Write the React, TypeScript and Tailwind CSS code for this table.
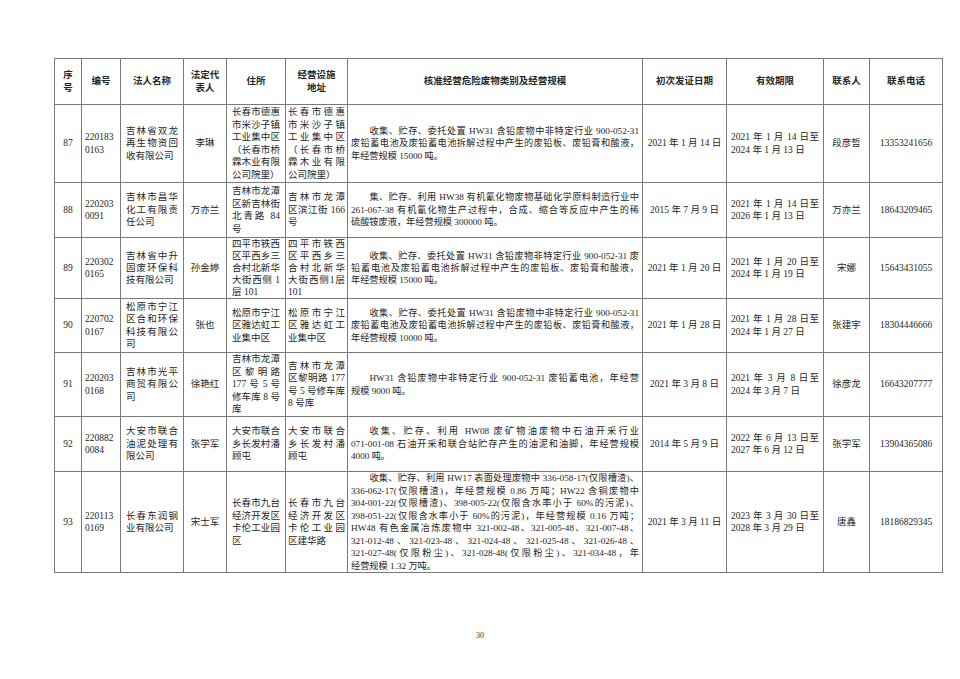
import React from "react";

type Row = {
  no: string;
  code: [string, string];
  name: string[];
  rep: string;
  addr: string[];
  fac: string[];
  scope: string[];
  first: string;
  valid: [string, string];
  contact: string;
  phone: string;
  h: string;
  tight?: boolean;
};

const rows: Row[] = [
  {
    no: "87",
    code: ["220183", "0163"],
    name: ["吉林省双龙", "再生物资回", "收有限公司"],
    rep: "李琳",
    addr: ["长春市德惠", "市米沙子镇", "工业集中区", "（长春市桥", "霖木业有限", "公司院里）"],
    fac: ["长春市德惠", "市米沙子镇", "工业集中区", "（长春市桥", "霖木业有限", "公司院里）"],
    scope: [
      "收集、贮存、委托处置 HW31 含铅废物中非特定行业 900-052-31",
      "废铅蓄电池及废铅蓄电池拆解过程中产生的废铅板、废铅膏和酸液，",
      "年经营规模 15000 吨。",
    ],
    first: "2021 年 1 月 14 日",
    valid: ["2021 年 1 月 14 日至", "2024 年 1 月 13 日"],
    contact: "段彦哲",
    phone: "13353241656",
    h: "h-[78px]",
  },
  {
    no: "88",
    code: ["220203", "0091"],
    name: ["吉林市昌华", "化工有限责", "任公司"],
    rep: "万亦兰",
    addr: ["吉林市龙潭", "区新吉林街", "北青路 84", "号"],
    fac: ["吉林市龙潭", "区滨江街 166", "号"],
    scope: [
      "集、贮存、利用 HW38 有机氰化物废物基础化学原料制造行业中",
      "261-067-38 有机氰化物生产过程中，合成、缩合等反应中产生的稀",
      "硫酸铵废液，年经营规模 300000 吨。",
    ],
    first: "2015 年 7 月 9 日",
    valid: ["2021 年 1 月 14 日至", "2026 年 1 月 13 日"],
    contact: "万亦兰",
    phone: "18643209465",
    h: "h-[55px]",
  },
  {
    no: "89",
    code: ["220302", "0165"],
    name: ["吉林省中升", "固废环保科", "技有限公司"],
    rep: "孙金婷",
    addr: ["四平市铁西", "区平西乡三", "合村北新华", "大街西侧 1", "层 101"],
    fac: ["四平市铁西", "区平西乡三", "合村北新华", "大街西侧1层", "101"],
    scope: [
      "收集、贮存、委托处置 HW31 含铅废物非特定行业 900-052-31 废",
      "铅蓄电池及废铅蓄电池拆解过程中产生的废铅板、废铅膏和酸液，",
      "年经营规模 15000 吨。",
    ],
    first: "2021 年 1 月 20 日",
    valid: ["2021 年 1 月 20 日至", "2024 年 1 月 19 日"],
    contact: "宋娜",
    phone: "15643431055",
    h: "h-[61px]",
    tight: true,
  },
  {
    no: "90",
    code: ["220702", "0167"],
    name: ["松原市宁江", "区合和环保", "科技有限公", "司"],
    rep: "张也",
    addr: ["松原市宁江", "区雅达虹工", "业集中区"],
    fac: ["松原市宁江", "区雅达虹工", "业集中区"],
    scope: [
      "收集、贮存、委托处置 HW31 含铅废物中非特定行业 900-052-31",
      "废铅蓄电池及废铅蓄电池拆解过程中产生的废铅板、废铅膏和酸液，",
      "年经营规模 10000 吨。",
    ],
    first: "2021 年 1 月 28 日",
    valid: ["2021 年 1 月 28 日至", "2024 年 1 月 27 日"],
    contact: "张建宇",
    phone: "18304446666",
    h: "h-[54px]",
  },
  {
    no: "91",
    code: ["220203", "0168"],
    name: ["吉林市光平", "商贸有限公", "司"],
    rep: "徐艳红",
    addr: ["吉林市龙潭", "区黎明路", "177 号 5 号", "修车库 8 号", "库"],
    fac: ["吉林市龙潭", "区黎明路 177", "号 5 号修车库", "8 号库"],
    scope: [
      "HW31 含铅废物中非特定行业 900-052-31 废铅蓄电池，年经营",
      "规模 9000 吨。",
    ],
    first: "2021 年 3 月 8 日",
    valid: ["2021 年 3 月 8 日至", "2024 年 3 月 7 日"],
    contact: "徐彦龙",
    phone: "16643207777",
    h: "h-[64px]",
  },
  {
    no: "92",
    code: ["220882", "0084"],
    name: ["大安市联合", "油泥处理有", "限公司"],
    rep: "张学军",
    addr: ["大安市联合", "乡长发村潘", "顾屯"],
    fac: ["大安市联合", "乡长发村潘", "顾屯"],
    scope: [
      "收集、贮存、利用 HW08 废矿物油废物中石油开采行业",
      "071-001-08 石油开采和联合站贮存产生的油泥和油脚，年经营规模",
      "4000 吨。",
    ],
    first: "2014 年 5 月 9 日",
    valid: ["2022 年 6 月 13 日至", "2027 年 6 月 12 日"],
    contact: "张学军",
    phone: "13904365086",
    h: "h-[55px]",
  },
  {
    no: "93",
    code: ["220113", "0169"],
    name: ["长春东润钢", "业有限公司"],
    rep: "宋士军",
    addr: ["长春市九台", "经济开发区", "卡伦工业园", "区"],
    fac: ["长春市九台", "经济开发区", "卡伦工业园", "区建华路"],
    scope: [
      "收集、贮存、利用 HW17 表面处理废物中 336-058-17(仅限槽渣)、",
      "336-062-17(仅限槽渣)，年经营规模 0.86 万吨；HW22 含铜废物中",
      "304-001-22(仅限槽渣)、398-005-22(仅限含水率小于 60%的污泥)、",
      "398-051-22(仅限含水率小于 60%的污泥)，年经营规模 0.16 万吨；",
      "HW48 有色金属冶炼废物中 321-002-48、321-005-48、321-007-48、",
      "321-012-48、321-023-48、321-024-48、321-025-48、321-026-48、",
      "321-027-48(仅限粉尘)、321-028-48(仅限粉尘)、321-034-48，年",
      "经营规模 1.32 万吨。",
    ],
    first: "2021 年 3 月 11 日",
    valid: ["2023 年 3 月 30 日至", "2028 年 3 月 29 日"],
    contact: "唐鑫",
    phone: "18186829345",
    h: "h-[100px]",
  },
];

function JLines({ lines, indent }: { lines: string[]; indent?: boolean }) {
  return (
    <>
      {lines.map((l, i) => {
        const last = i === lines.length - 1;
        const cls =
          (last ? "text-left" : "text-justify [text-align-last:justify]") +
          (indent && i === 0 ? " indent-[2em]" : "");
        return (
          <div key={i} className={cls}>
            {l}
          </div>
        );
      })}
    </>
  );
}

const td = "border border-[#7a7a7a] p-0 align-middle";
const th = "border border-[#7a7a7a] p-0 align-middle font-bold text-center";

export default function App() {
  const widths = [27, 39, 63, 43, 59, 62, 295, 84, 97, 46, 73];
  return (
    <div className="min-h-[679px] w-[960px] bg-white pl-[54px] pt-[58px] font-['Liberation_Serif','Noto_Sans_CJK_SC',serif] text-[9.5px] leading-[12.5px] text-[#262626]">
      <table className="table-fixed border-collapse w-[888px]">
        <colgroup>
          {widths.map((w, i) => (
            <col key={i} style={{ width: w }} />
          ))}
        </colgroup>
        <thead>
          <tr className="h-[46px]">
            <th className={th}>
              <div>序</div>
              <div>号</div>
            </th>
            <th className={th}>编号</th>
            <th className={th}>法人名称</th>
            <th className={th}>
              <div>法定代</div>
              <div>表人</div>
            </th>
            <th className={th}>住所</th>
            <th className={th}>
              <div>经营设施</div>
              <div>地址</div>
            </th>
            <th className={th}>核准经营危险废物类别及经营规模</th>
            <th className={th}>初次发证日期</th>
            <th className={th}>有效期限</th>
            <th className={th}>联系人</th>
            <th className={th}>联系电话</th>
          </tr>
        </thead>
        <tbody>
          {rows.map((r) => (
            <tr key={r.no} className={r.h + (r.tight ? " leading-[12px]" : "")}>
              <td className={td + " text-center"}>{r.no}</td>
              <td className={td + " px-[3px] text-left"}>
                <div>{r.code[0]}</div>
                <div>{r.code[1]}</div>
              </td>
              <td className={td + " px-[5px]"}>
                <JLines lines={r.name} />
              </td>
              <td className={td + " text-center"}>{r.rep}</td>
              <td className={td + " px-[5px]"}>
                <JLines lines={r.addr} />
              </td>
              <td className={td + " px-[2px]"}>
                <JLines lines={r.fac} />
              </td>
              <td className={td + " px-[3px] text-[9.2px]"}>
                <JLines lines={r.scope} indent />
              </td>
              <td className={td + " text-center"}>{r.first}</td>
              <td className={td + " px-[4px]"}>
                <JLines lines={[r.valid[0], r.valid[1]]} />
              </td>
              <td className={td + " text-center"}>{r.contact}</td>
              <td className={td + " text-center"}>{r.phone}</td>
            </tr>
          ))}
        </tbody>
      </table>
      <div className="w-[852px] pt-[58px] text-center text-[8px] leading-[10px] text-[#333]">30</div>
    </div>
  );
}
